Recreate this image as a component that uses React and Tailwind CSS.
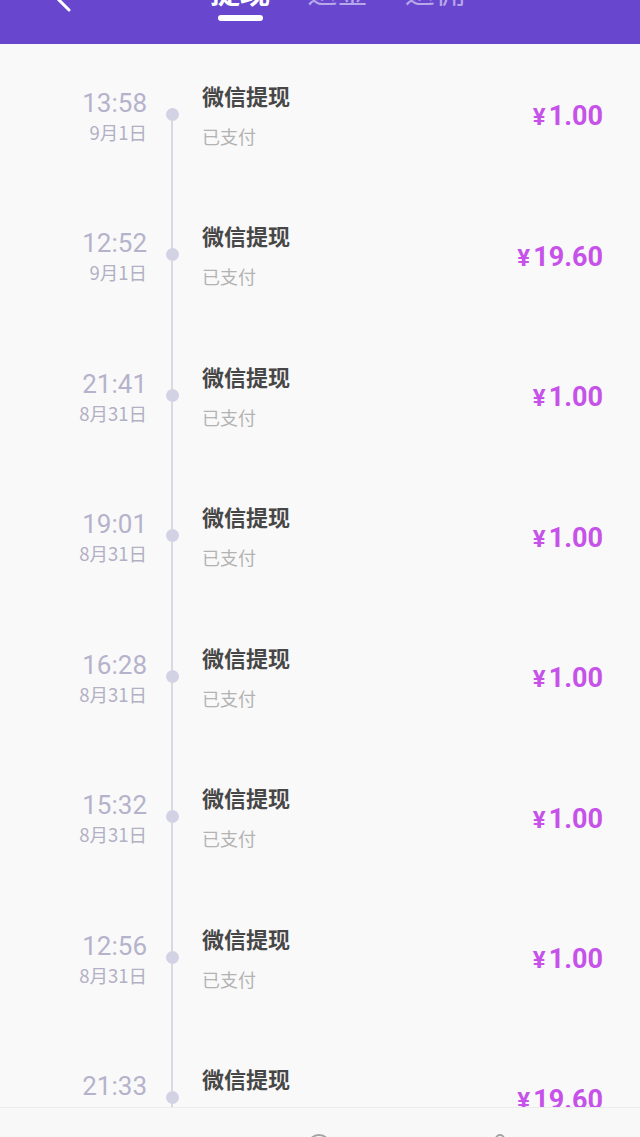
import React from "react";

const rows = [
  { time: "13:58", date: "9月1日", amount: "1.00" },
  { time: "12:52", date: "9月1日", amount: "19.60" },
  { time: "21:41", date: "8月31日", amount: "1.00" },
  { time: "19:01", date: "8月31日", amount: "1.00" },
  { time: "16:28", date: "8月31日", amount: "1.00" },
  { time: "15:32", date: "8月31日", amount: "1.00" },
  { time: "12:56", date: "8月31日", amount: "1.00" },
  { time: "21:33", date: "8月31日", amount: "19.60" },
];

const cjk = { fontFamily: '"Noto Sans CJK SC", "Noto Sans", sans-serif' };
const num = { fontFamily: 'Roboto, "Noto Sans CJK SC", sans-serif' };

function Row({ r, first }) {
  return (
    <div className="flex h-[140.5px] shrink-0 items-stretch">
      <div className="flex w-[147px] flex-col items-end justify-center gap-[3px] pt-[4px]">
        <div className="text-[26px] leading-[28px] text-[#b5b3cb]" style={num}>
          {r.time}
        </div>
        <div className="text-[18.5px] leading-[24px] text-[#b1b0c4]" style={cjk}>
          {r.date}
        </div>
      </div>
      <div className="flex w-[50px] flex-col items-center">
        <div className={`w-[1.5px] flex-1 ${first ? "bg-transparent" : "bg-[#d9d9e1]"}`} />
        <div className="h-[13px] w-[13px] rounded-full bg-[#d3d2e5]" />
        <div className="w-[1.5px] flex-1 bg-[#d9d9e1]" />
      </div>
      <div className="flex flex-col justify-center gap-[15px] pl-[5px]" style={cjk}>
        <div className="text-[22px] font-semibold leading-[28px] text-[#474747]">微信提现</div>
        <div className="text-[18px] leading-[24px] text-[#b3b3b3]">已支付</div>
      </div>
      <div className="ml-auto flex items-center pr-[37px] pt-[4px]">
        <div className="flex items-baseline text-[27px] font-bold text-[#c652e9]" style={num}>
          <span className="mr-[3px] text-[24px]">¥</span>
          <span>{r.amount}</span>
        </div>
      </div>
    </div>
  );
}

export default function App() {
  return (
    <div className="flex h-[1137px] w-[640px] flex-col overflow-hidden bg-[#f9f9f9]">
      <div className="flex h-[44px] shrink-0 items-start overflow-hidden bg-[#6846cd]">
        <svg
          className="ml-[50px] mt-[-12px] h-[24px] w-[24px] overflow-visible"
          viewBox="0 0 24 24"
          fill="none"
        >
          <polyline
            points="19,-2 7,10 19,22"
            stroke="white"
            strokeWidth="3"
            strokeLinecap="round"
            strokeLinejoin="round"
          />
        </svg>
        <div className="ml-[136px] mt-[-25px] flex gap-[37.5px]" style={cjk}>
          <div className="flex w-[60px] flex-col items-center">
            <div className="text-[30px] font-bold leading-[30px] text-white">提现</div>
            <div className="mt-[10px] h-[6px] w-[45px] rounded-full bg-white" />
          </div>
          <div className="flex w-[60px] flex-col items-center">
            <div className="text-[30px] leading-[30px] text-[#b7a8ea]">返金</div>
          </div>
          <div className="flex w-[60px] flex-col items-center">
            <div className="text-[30px] leading-[30px] text-[#b7a8ea]">返佣</div>
          </div>
        </div>
      </div>
      <div className="flex h-[1063px] shrink-0 flex-col overflow-hidden">
        {rows.map((r, i) => (
          <Row key={i} r={r} first={i === 0} />
        ))}
      </div>
      <div className="flex flex-1 items-start overflow-hidden border-t border-[#ececec] bg-[#f8f8f8] pt-[26px]">
        <div className="ml-[307px] h-[24px] w-[24px] rounded-full border-2 border-[#a3a3a3]" />
        <div className="ml-[164px] h-[10px] w-[10px] rounded-full border-2 border-[#a3a3a3]" />
      </div>
    </div>
  );
}
